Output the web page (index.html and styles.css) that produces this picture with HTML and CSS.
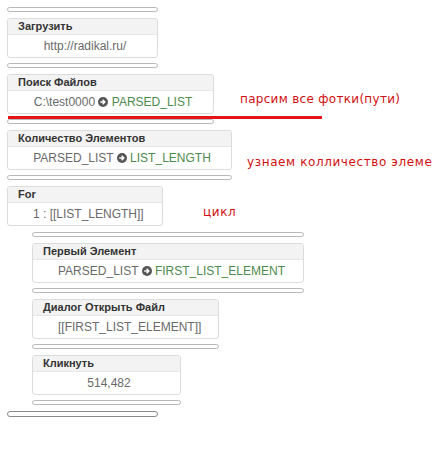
FILE: index.html
```html
<!DOCTYPE html>
<html>
<head>
<meta charset="utf-8">
<link rel="stylesheet" href="styles.css">
</head>
<body>
<div class="canvas">
  <div class="bar w151"></div>

  <div class="card w151">
    <div class="card-head">Загрузить</div>
    <div class="card-body">http://radikal.ru/</div>
  </div>
  <div class="bar w151"></div>

  <div class="card w207">
    <div class="card-head">Поиск Файлов</div>
    <div class="card-body">C:\test0000 <span class="arrow"><svg viewBox="0 0 10 10" width="10" height="10"><circle cx="5" cy="5" r="5" fill="#555"/><path d="M2.3 5h4.2M4.6 2.8L6.8 5 4.6 7.2" stroke="#fff" stroke-width="1.5" fill="none"/></svg></span> <span class="out">PARSED_LIST</span></div>
  </div>
  <div class="bar w207"></div>

  <div class="card w225">
    <div class="card-head">Количество Элементов</div>
    <div class="card-body">PARSED_LIST <span class="arrow"><svg viewBox="0 0 10 10" width="10" height="10"><circle cx="5" cy="5" r="5" fill="#555"/><path d="M2.3 5h4.2M4.6 2.8L6.8 5 4.6 7.2" stroke="#fff" stroke-width="1.5" fill="none"/></svg></span> <span class="out">LIST_LENGTH</span></div>
  </div>
  <div class="bar w225"></div>

  <div class="card w156">
    <div class="card-head">For</div>
    <div class="card-body">1 : [[LIST_LENGTH]]</div>
  </div>
  <div class="children">
    <div class="bar w272"></div>

    <div class="card w272">
      <div class="card-head">Первый Элемент</div>
      <div class="card-body">PARSED_LIST <span class="arrow"><svg viewBox="0 0 10 10" width="10" height="10"><circle cx="5" cy="5" r="5" fill="#555"/><path d="M2.3 5h4.2M4.6 2.8L6.8 5 4.6 7.2" stroke="#fff" stroke-width="1.5" fill="none"/></svg></span> <span class="out">FIRST_LIST_ELEMENT</span></div>
    </div>
    <div class="bar w272"></div>

    <div class="card w187">
      <div class="card-head">Диалог Открыть Файл</div>
      <div class="card-body">[[FIRST_LIST_ELEMENT]]</div>
    </div>
    <div class="bar w187"></div>

    <div class="card w149">
      <div class="card-head">Кликнуть</div>
      <div class="card-body">514,482</div>
    </div>
    <div class="bar w149"></div>
  </div>
  <div class="bar end w151"></div>

  <div class="redline"></div>
  <div class="note note1">парсим все фотки(пути)</div>
  <div class="note note2">узнаем колличество элеме</div>
  <div class="note note3">цикл</div>
</div>
</body>
</html>
```

FILE: styles.css
```css
html, body {
  margin: 0;
  padding: 0;
  background: #fff;
  overflow: hidden;
}
.canvas {
  position: relative;
  width: 435px;
  height: 453px;
  padding: 7px 0 0 7px;
  box-sizing: border-box;
  font-family: "Liberation Sans", Arial, sans-serif;
}
.bar {
  box-sizing: border-box;
  height: 5px;
  border: 1px solid #b8b8b8;
  border-radius: 3px;
  background: #fff;
  margin-bottom: 6px;
}
.bar.end {
  height: 6px;
  border-color: #8a8a8a;
  margin-top: 6px;
}
.card {
  box-sizing: border-box;
  border: 1px solid #dcdcdc;
  border-radius: 3px;
  margin-bottom: 5px;
  background: #fff;
}
.card-head {
  height: 15px;
  line-height: 15px;
  background: #f3f3f3;
  border-bottom: 1px solid #e6e6e6;
  padding-left: 10px;
  font-size: 11px;
  font-weight: bold;
  color: #333;
  border-radius: 2px 2px 0 0;
}
.card-body {
  height: 22px;
  line-height: 22px;
  font-size: 12px;
  color: #6a6a6a;
  text-align: center;
  padding: 0 20px 0 25px;
  white-space: nowrap;
}
.card-body .out {
  color: #4d8a4d;
}
.arrow {
  display: inline-block;
  width: 10px;
  height: 10px;
  vertical-align: -1px;
}
.arrow svg {
  display: block;
}
.w151 { width: 151px; }
.w207 { width: 207px; }
.w225 { width: 225px; }
.w156 { width: 156px; }
.w272 { width: 272px; }
.w187 { width: 187px; }
.w149 { width: 149px; }
.children {
  margin-left: 25px;
  padding-top: 1px;
}
.children > .bar:last-child {
  margin-bottom: 0;
}
.redline {
  position: absolute;
  left: 8px;
  top: 116px;
  width: 314px;
  height: 3px;
  background: #e5141a;
}
.note {
  position: absolute;
  font-family: "DejaVu Sans", Verdana, sans-serif;
  font-size: 12px;
  color: #d01010;
  white-space: nowrap;
  letter-spacing: 0.3px;
}
.note1 { left: 240px; top: 92px; }
.note2 { left: 247px; top: 155px; letter-spacing: 0.6px; }
.note3 { left: 203px; top: 205px; letter-spacing: 0.6px; }
```
